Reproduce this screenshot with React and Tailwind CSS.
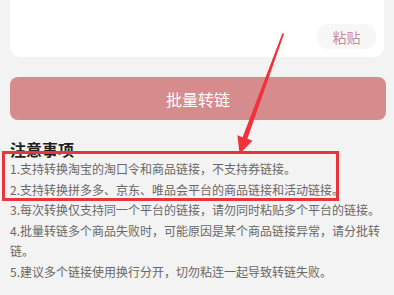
import React from 'react';

const notes = [
  '1.支持转换淘宝的淘口令和商品链接，不支持券链接。',
  '2.支持转换拼多多、京东、唯品会平台的商品链接和活动链接。',
  '3.每次转换仅支持同一个平台的链接，请勿同时粘贴多个平台的链接。',
  '4.批量转链多个商品失败时，可能原因是某个商品链接异常，请分批转链。',
  '5.建议多个链接使用换行分开，切勿粘连一起导致转链失败。',
];

export default function App() {
  return (
    <div className="relative w-[394px] h-[295px] overflow-hidden bg-[#f3f3f3] font-['Noto_Sans_CJK_SC','Noto_Sans',sans-serif]">
      {/* Input card (top cut off) */}
      <div className="mx-[10px] h-[57px] bg-white rounded-b-[10px] flex items-end justify-end pr-[8px] pb-[8px]">
        <button className="w-[59px] h-[25px] rounded-[10px] bg-[#f7f7f7] text-[14px] leading-none text-[#cc8b90]">
          粘贴
        </button>
      </div>

      {/* Batch convert button */}
      <button className="mx-[10px] mt-[20px] w-[376px] h-[43px] rounded-[8px] bg-[#d68b8c] text-white text-[16px]">
        批量转链
      </button>

      {/* Notes */}
      <div className="px-[10px] mt-[19px]">
        <h3 className="text-[16px] leading-[20px] font-bold text-[#1f1f1f]">注意事项</h3>
        <div className="text-[12px] leading-[20.5px] text-[#686868]">
          {notes.map((n) => (
            <p key={n}>{n}</p>
          ))}
        </div>
      </div>

      {/* Annotation box */}
      <div className="absolute left-[2px] top-[151px] w-[337px] h-[50px] border-[3px] border-[#e8343b]" />

      {/* Annotation arrow */}
      <svg className="absolute left-0 top-0" width="394" height="295" viewBox="0 0 394 295">
        <polygon
          points="282.5,33 284,34 247.4,138.8 252.5,140.7 239.6,154 237.4,135.3 242.6,137.2"
          fill="#f0323a"
        />
      </svg>
    </div>
  );
}
